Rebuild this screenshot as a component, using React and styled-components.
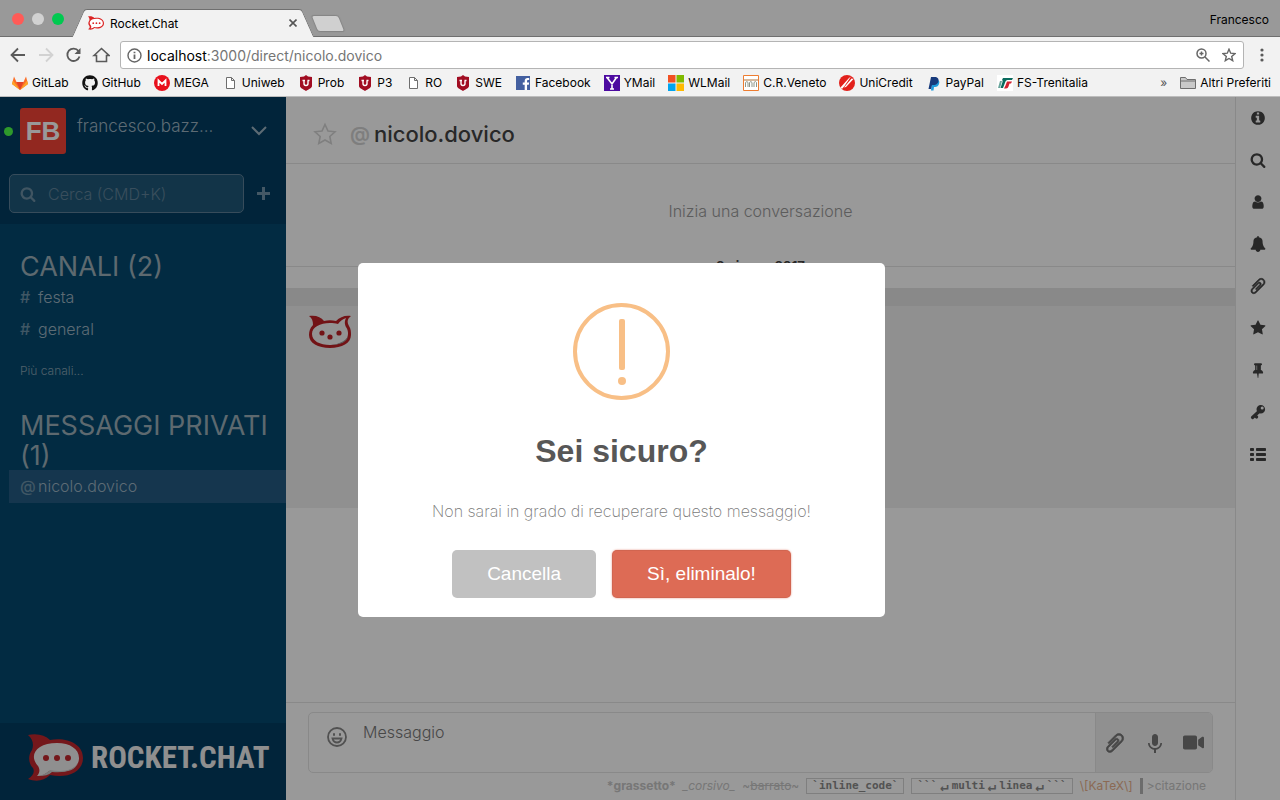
import React from "react";
import styled, { createGlobalStyle, css } from "styled-components";
import { FaGithub, FaVideo, FaFacebookF } from "react-icons/fa";
import { MdKeyboardVoice } from "react-icons/md";

const sans = `Inter, "Liberation Sans", sans-serif`;
const helvetica = `"Liberation Sans", Arial, sans-serif`;
const mono = `"DejaVu Sans Mono", "Liberation Mono", monospace`;

const GlobalStyle = createGlobalStyle`
  *, *::before, *::after { box-sizing: border-box; }
  body { margin: 0; font-family: ${sans}; }
  button { font: inherit; color: inherit; padding: 0; border: 0; background: none; cursor: pointer; }
  a { color: inherit; text-decoration: none; }
  svg { display: block; flex: none; }
`;

const Window = styled.div`
  display: flex;
  flex-direction: column;
  height: 100vh;
  min-height: 640px;
  overflow: hidden;
`;

/* ---------- browser chrome ---------- */

const TitleBar = styled.div`
  display: flex;
  align-items: flex-end;
  height: 37px;
  padding: 0 11px 0 12px;
  background: #999;
  border-bottom: 1px solid #6f6f6f;
  font-size: 12px;
`;

const Lights = styled.div`
  display: flex;
  gap: 8px;
  padding-bottom: 11px;
`;

const Light = styled.button`
  && { background: ${(p) => p.$color}; }
  width: 12px;
  height: 12px;
  border-radius: 50%;
`;

const Tab = styled.div`
  position: relative;
  z-index: 0;
  display: flex;
  align-items: center;
  width: 230px;
  height: 28px;
  margin: 0 0 -1px 14px;
  padding: 0 11px 0 10px;
  gap: 6px;
  color: #000;
  &::before, &::after {
    content: "";
    position: absolute;
    z-index: -1;
    top: 0;
    bottom: 0;
    width: 60%;
    background: #f2f2f2;
    border-top: 1px solid #6f6f6f;
  }
  &::before {
    left: 0;
    border-left: 1px solid #6f6f6f;
    border-top-left-radius: 3px;
    transform: skewX(-24deg);
  }
  &::after {
    right: 0;
    border-right: 1px solid #6f6f6f;
    border-top-right-radius: 3px;
    transform: skewX(24deg);
  }
`;

const TabTitle = styled.span`
  flex: 1;
`;

const NewTab = styled.button`
  width: 26px;
  height: 15px;
  margin: 0 0 5px 7px;
  && { background: #d0d0d0; }
  box-shadow: 0 0 1px 1px #858585;
  border-radius: 2px;
  transform: skewX(22deg);
`;

const Profile = styled.button`
  margin: 0 0 8px auto;
  line-height: 16px;
`;

const Toolbar = styled.div`
  display: flex;
  align-items: center;
  gap: 10px;
  height: 36px;
  padding: 0 10px 0 8px;
  background: #f2f2f2;
  color: #666;
`;

const NavButton = styled.button`
  width: 18px;
  height: 18px;
  && { color: ${(p) => (p.$dim ? "#d2d2d2" : "#5a5a5a")}; }
`;

const AddressBox = styled.div`
  display: flex;
  flex: 1;
  align-items: center;
  gap: 12px;
  height: 28px;
  padding: 0 7px 0 6px;
  background: #fff;
  border: 1px solid #b4b4b4;
  border-radius: 3px;
`;

const Address = styled.a`
  flex: 1;
  margin-left: -7px;
  font-size: 14px;
  color: #757575;
  b { font-weight: 400; color: #000; }
`;

const BookmarkBar = styled.nav`
  display: flex;
  align-items: center;
  gap: 13px;
  height: 24px;
  padding: 0 9px 4px 12px;
  background: #f2f2f2;
  border-bottom: 1px solid #bdbdbd;
  font-size: 12px;
  white-space: nowrap;
`;

const Bookmark = styled.a`
  display: flex;
  align-items: center;
  gap: 4px;
  line-height: 16px;
`;

const More = styled.button`
  margin-left: auto;
  && { color: #555; }
`;

/* ---------- chat page ---------- */

const Page = styled.div`
  position: relative;
  display: flex;
  flex: 1;
  min-height: 0;
`;

const Sidebar = styled.aside`
  display: flex;
  flex: none;
  flex-direction: column;
  width: 286px;
  background: #04496f;
  color: #9bb3c2;
  font-size: 16px;
  font-weight: 300;
`;

const SideHeader = styled.header`
  height: 127px;
  padding: 11px 9px 0 4px;
  background: #033d61;
`;

const Account = styled.div`
  display: flex;
  align-items: center;
  height: 46px;
`;

const Status = styled.span`
  width: 9px;
  height: 9px;
  margin-right: 7px;
  border-radius: 50%;
  background: #4eff49;
`;

const Initials = styled.div`
  width: 46px;
  height: 46px;
  border-radius: 3px;
  background: #f44336;
  color: #fff;
  font: 700 26px/46px ${helvetica};
  text-align: center;
`;

const UserName = styled.span`
  flex: 1;
  margin: 0 0 10px 11px;
  font-size: 17px;
  line-height: 24px;
`;

const MenuButton = styled.button`
  margin-right: 10px;
`;

const SearchRow = styled.div`
  display: flex;
  align-items: center;
  gap: 13px;
  padding: 20px 7px 0 5px;
`;

const SearchField = styled.label`
  display: flex;
  flex: 1;
  align-items: center;
  gap: 12px;
  height: 39px;
  padding: 0 10px;
  border: 1px solid #5c7f98;
  border-radius: 5px;
  background: #1f5878;
  color: #6c8ea4;
`;

const SearchInput = styled.input`
  flex: 1;
  width: 0;
  padding: 0;
  border: 0;
  outline: 0;
  background: none;
  color: #fff;
  font: 300 16px/24px ${sans};
  &::placeholder { color: #5f839b; opacity: 1; }
`;

const AddButton = styled.button`
  && { color: #7293a8; }
`;

const Rooms = styled.nav`
  flex: 1;
  min-height: 0;
  padding: 28px 0 0 9px;
`;

const RoomHeading = styled.h3`
  margin: 0 0 -1px;
  padding: 0 0 0 11px;
  font-size: 27px;
  font-weight: 400;
  line-height: 30px;
  color: #9bafba;
`;

const Room = styled.a`
  display: flex;
  gap: 4px;
  height: ${(p) => (p.$active ? 33 : 32)}px;
  padding-left: 11px;
  line-height: 32px;
  background: ${(p) => (p.$active ? "#235a82" : "none")};
`;

const Sigil = styled.span`
  width: 14px;
  font-weight: 500;
  color: #6c91a8;
`;

const MoreRooms = styled.a`
  display: block;
  padding: 17px 0 31px 11px;
  font-size: 12px;
  line-height: 18px;
  color: #85a1b2;
`;

const SideFooter = styled.footer`
  display: flex;
  align-items: center;
  gap: 8px;
  height: 77px;
  padding: 0 0 8px 28px;
  background: #033d61;
  color: #fff;
`;

const Wordmark = styled.span`
  font-family: "Roboto Condensed", "Open Sans Condensed", "DejaVu Sans Condensed", ${sans};
  font-size: 31px;
  font-weight: 700;
  line-height: 40px;
  color: #efefef;
`;

const Main = styled.main`
  display: flex;
  flex: 1;
  flex-direction: column;
  min-width: 0;
  background: #fff;
`;

const RoomHeader = styled.header`
  display: flex;
  align-items: center;
  height: 67px;
  padding: 8px 27px 0;
  border-bottom: 1px solid #e4e4e4;
  color: #d4d4d4;
`;

const RoomTitle = styled.h2`
  display: flex;
  gap: 4px;
  margin: 0 0 0 13px;
  font-size: 22px;
  font-weight: 500;
  line-height: 28px;
  color: #444;
`;

const TitleSigil = styled.span`
  font-size: 20px;
  font-weight: 600;
  color: #d2d2d2;
`;

const Messages = styled.section`
  flex: 1;
  min-height: 0;
  overflow: hidden;
`;

const StartText = styled.p`
  margin: 0;
  padding: 35px 0 39px;
  font-size: 16px;
  font-weight: 300;
  line-height: 24px;
  text-align: center;
  color: #9a9a9a;
`;

const DateDivider = styled.div`
  display: flex;
  align-items: center;
  height: 8px;
  font-size: 13px;
  font-weight: 700;
  color: #444;
  &::before, &::after {
    content: "";
    flex: 1;
    height: 1px;
    background: #e4e4e4;
  }
  span { padding: 0 10px; }
`;

const Unread = styled.div`
  height: 18px;
  margin-top: 18px;
  background: #e4e4e4;
`;

const Message = styled.article`
  height: 202px;
  padding: 9px 22px;
  background: #f1f1f1;
`;

const Composer = styled.footer`
  padding: 9px 22px 6px;
  border-top: 1px solid #e4e4e4;
`;

const ComposerBox = styled.div`
  display: flex;
  height: 61px;
  overflow: hidden;
  border: 1px solid #e4e4e4;
  border-radius: 5px;
  color: #888;
`;

const EmojiButton = styled.button`
  margin: 0 16px 12px 18px;
`;

const MessageInput = styled.textarea`
  flex: 1;
  padding: 7px 0;
  border: 0;
  outline: 0;
  resize: none;
  background: none;
  font: 300 16px/24px ${sans};
  &::placeholder { color: #777; opacity: 1; }
`;

const Actions = styled.div`
  display: flex;
  align-items: center;
  justify-content: space-between;
  width: 117px;
  padding: 0 8px;
  border-left: 1px solid #e4e4e4;
  background: #f1f1f1;
  && button { color: #777; }
`;

const Hints = styled.div`
  display: flex;
  align-items: center;
  justify-content: flex-end;
  gap: 7px;
  height: 20px;
  padding: 4px 7px 0 0;
  margin-top: 1px;
  font-size: 12px;
  line-height: 16px;
  white-space: nowrap;
  color: #c6c6c6;
`;

const Code = styled.code`
  display: flex;
  align-items: center;
  height: 16px;
  padding: 0 5px;
  border: 1px solid #d4d4d4;
  font: 700 11px/14px ${mono};
  color: #8a8a8a;
`;

const Return = styled.span`
  padding: 0 3px;
  font-size: 14px;
`;

const Katex = styled.span`
  color: #e8b08c;
`;

const Quote = styled.span`
  padding-left: 4px;
  border-left: 3px solid #b4b4b4;
`;

const Rail = styled.nav`
  display: flex;
  flex: none;
  flex-direction: column;
  align-items: center;
  width: 45px;
  border-left: 1px solid #e4e4e4;
  background: #fff;
  button {
    display: grid;
    place-items: center;
    width: 44px;
    height: 42px;
    color: #444;
  }
`;

/* ---------- confirmation dialog ---------- */

const Overlay = styled.div`
  position: absolute;
  inset: 0;
  background: rgba(0, 0, 0, 0.4);
`;

const Dialog = styled.section`
  position: absolute;
  top: 50%;
  left: 50%;
  display: flex;
  flex-direction: column;
  align-items: center;
  width: 527px;
  margin: -186px 0 0 -282px;
  padding: 40px 18px 19px;
  border-radius: 5px;
  background: #fff;
  font-family: ${helvetica};
`;

const DialogTitle = styled.h2`
  margin: 29px 0 26px;
  font-size: 32px;
  font-weight: 700;
  line-height: 44px;
  color: #575757;
`;

const DialogText = styled.p`
  margin: 0;
  font: 200 16px/24px ${sans};
  color: #797979;
`;

const DialogButtons = styled.div`
  display: flex;
  gap: 16px;
  margin-top: 27px;
`;

const DialogButton = styled.button`
  height: 48px;
  padding: 0 35px;
  border-radius: 5px;
  font: 400 19px/24px ${helvetica};
  && {
    color: #fff;
    background: ${(p) => (p.$danger ? "#dd6b55" : "#c1c1c1")};
  }
  ${(p) => p.$danger && css`box-shadow: 0 0 2px rgba(221, 107, 85, 0.8), inset 0 0 0 1px rgba(0, 0, 0, 0.05);`}
`;

/* ---------- drawings ---------- */

const glyphs = {
  info: "M1152 1376v-160q0-14-9-23t-23-9h-96v-512q0-14-9-23t-23-9h-320q-14 0-23 9t-9 23v160q0 14 9 23t23 9h96v320h-96q-14 0-23 9t-9 23v160q0 14 9 23t23 9h448q14 0 23-9t9-23zm-128-896v-160q0-14-9-23t-23-9h-192q-14 0-23 9t-9 23v160q0 14 9 23t23 9h192q14 0 23-9t9-23zm640 416q0 209-103 385.5t-279.5 279.5-385.5 103-385.5-103-279.5-279.5-103-385.5 103-385.5 279.5-279.5 385.5-103 385.5 103 279.5 279.5 103 385.5z",
  search: "M1216 832q0-185-131.5-316.5t-316.5-131.5-316.5 131.5-131.5 316.5 131.5 316.5 316.5 131.5 316.5-131.5 131.5-316.5zm512 832q0 52-38 90t-90 38q-54 0-90-38l-343-342q-179 124-399 124-143 0-273.5-55.5t-225-150-150-225-55.5-273.5 55.5-273.5 150-225 225-150 273.5-55.5 273.5 55.5 225 150 150 225 55.5 273.5q0 220-124 399l343 343q37 37 37 90z",
  user: "M1536 1399q0 109-62.5 187t-150.5 78h-854q-88 0-150.5-78t-62.5-187q0-85 8.5-160.5t31.5-152 58.5-131 94-89 134.5-34.5q131 128 313 128t313-128q76 0 134.5 34.5t94 89 58.5 131 31.5 152 8.5 160.5zm-256-887q0 159-112.5 271.5t-271.5 112.5-271.5-112.5-112.5-271.5 112.5-271.5 271.5-112.5 271.5 112.5 112.5 271.5z",
  bell: "M1728 1408q0 52-38 90t-90 38h-448q0 106-75 181t-181 75-181-75-75-181h-448q-52 0-90-38t-38-90q50-42 91-88t85-119.5 74.5-158.5 50-206 19.5-260q0-152 117-282.5t307-158.5q-8-19-8-39 0-40 28-68t68-28 68 28 28 68q0 20-8 39 190 28 307 158.5t117 282.5q0 139 19.5 260t50 206 74.5 158.5 85 119.5 91 88z",
  clip: "M1596 1385q0 117-79 196t-196 79q-135 0-235-100l-777-776q-113-115-113-271 0-159 110-270t269-111q158 0 273 113l605 606q10 10 10 22 0 16-30.5 46.5t-46.5 30.5q-13 0-23-10l-606-607q-79-77-181-77-106 0-179 75t-73 181q0 105 76 181l776 777q63 63 145 63 64 0 106-42t42-106q0-82-63-145l-581-581q-26-24-60-24-29 0-48 19t-19 48q0 32 25 59l410 410q10 10 10 22 0 16-31 47t-47 31q-12 0-22-10l-410-410q-63-61-63-149 0-82 57-139t139-57q88 0 149 63l581 581q100 98 100 235z",
  star: "M1728 647q0 22-26 48l-363 354 86 500q1 7 1 20 0 21-10.5 35.5t-30.5 14.5q-19 0-40-12l-449-236-449 236q-22 12-40 12-21 0-31.5-14.5t-10.5-35.5q0-6 2-20l86-500-364-354q-25-27-25-48 0-37 56-46l502-73 225-455q19-41 49-41t49 41l225 455 502 73q56 9 56 46z",
  pin: "M800 864v-448q0-14-9-23t-23-9-23 9-9 23v448q0 14 9 23t23 9 23-9 9-23zm672 352q0 26-19 45t-45 19h-429l-51 483q-2 12-10.5 20.5t-20.5 8.5h-1q-27 0-32-27l-76-485h-404q-26 0-45-19t-19-45q0-123 78.5-221.5t177.5-98.5v-512q-52 0-90-38t-38-90 38-90 90-38h640q52 0 90 38t38 90-38 90-90 38v512q99 0 177.5 98.5t78.5 221.5z",
};

const Glyph = ({ name, size = 16, flip, bold = 0 }) => (
  <svg width={size} height={size} viewBox="0 0 1792 1792" fill="currentColor" stroke="currentColor" strokeWidth={bold} aria-hidden="true">
    <path d={glyphs[name]} transform={flip ? "translate(1792 0) scale(-1 1)" : undefined} />
  </svg>
);

const KeyIcon = () => (
  <svg width="16" height="16" viewBox="0 0 16 16" aria-hidden="true">
    <path d="M2.500 13.500 9 7.500M4.800 11.500l1.800 1.500" fill="none" stroke="currentColor" strokeWidth="3.200" strokeLinecap="round" />
    <path fillRule="evenodd" d="M10.800 1a4.300 4.300 0 1 1 0 8.600 4.300 4.300 0 0 1 0-8.600zm1.400 1.600a1.500 1.500 0 1 0 0 3 1.500 1.500 0 0 0 0-3z" fill="currentColor" />
  </svg>
);

const ListIcon = () => (
  <svg width="16" height="13" viewBox="0 0 16 13" fill="currentColor" aria-hidden="true">
    {[0, 5, 10].map((y) => (
      <g key={y}>
        <rect x="0" y={y} width="4" height="3" rx=".8" />
        <rect x="6" y={y} width="10" height="3" rx=".8" />
      </g>
    ))}
  </svg>
);

const Stroke = ({ size = 18, w = 2, box = 18, children }) => (
  <svg width={size} height={size} viewBox={`0 0 ${box} ${box}`} fill="none" stroke="currentColor" strokeWidth={w} aria-hidden="true">
    {children}
  </svg>
);

const RocketLogo = ({ width, height, outlined }) => (
  <svg width={width} height={height} viewBox="0 0 55 47" aria-hidden="true">
    <path
      d="M0 1C9-1 17 1 22 6c17-3 33 4 33 18S39 45 22 41C16 47 8 48 0 45c5-3 7-7 5-11-5-5-5-13-1-18C6 11 5 5 0 1z"
      fill={outlined ? "#db2323" : "#c1272d"}
    />
    <path d="M29 9c13 0 22 6 22 15s-9 14-22 14c-3 0-6 0-8-1-3 3-7 5-12 5 3-3 3-7 1-10-10-11-1-23 19-23z" fill={outlined ? "#fff" : "#efefef"} />
    {!outlined && <path d="M50 29c-5 8-16 9-28 7-3 3-7 5-11 6 5 0 10-1 13-4 13 1 23-1 26-9z" fill="#cccccc" />}
    <g fill={outlined ? "#db2323" : "#c1272d"}>
      <circle cx="18" cy="24" r="3" />
      <circle cx="29" cy="24" r="3" />
      <circle cx="40" cy="24" r="3" />
    </g>
  </svg>
);

const RocketCat = () => (
  <svg width="44" height="34" viewBox="0 0 44 34" role="img" aria-label="rocket.cat">
    <path d="M1 1c7-1 12 1 15 5 4-1 8-1 12 0 4-4 9-6 15-5-4 3-4 6-2 10 2 3 2 6 2 9 0 8-9 13-21 13S1 28 1 20c0-4 1-7 4-10C5 6 4 3 1 1z" fill="#bf2026" />
    <path d="M22 8c3 0 5 0 8 1 2-3 5-5 8-6-2 4-1 7 0 9 2 3 2 5 2 7 0 7-8 11-18 11S4 26 4 19 12 8 22 8z" fill="#f6f6f6" />
    <path d="M40 21c-2 5-9 8-17 9 10 0 17-4 17-9z" fill="#999" />
    <g fill="#bf2026">
      <circle cx="14" cy="18" r="2.600" />
      <circle cx="31" cy="18" r="2.600" />
      <circle cx="22" cy="22" r="2.600" />
    </g>
  </svg>
);

const WarningIcon = () => (
  <svg width="97" height="97" viewBox="0 0 97 97" aria-hidden="true">
    <circle cx="48.500" cy="48.500" r="46.500" fill="none" stroke="#f8bf86" strokeWidth="4" />
    <rect x="46" y="16" width="6" height="51" rx="2" fill="#f8bf86" />
    <circle cx="49" cy="78" r="4" fill="#f8bf86" />
  </svg>
);

const Small = ({ children }) => (
  <svg width="16" height="16" viewBox="0 0 16 16" aria-hidden="true">{children}</svg>
);

const GitLabIcon = () => (
  <Small>
    <path d="M8 15 0 9l2-7.500L4.500 7h7L14 1.500 16 9z" fill="#fc6d26" />
    <path d="M8 15 4.500 7h7z" fill="#e24329" />
    <path d="M8 15 0 9l1-3.500zM8 15l8-6-1-3.500z" fill="#fca326" />
  </Small>
);
const MegaIcon = () => (
  <Small>
    <circle cx="8" cy="8" r="8" fill="#e8101c" />
    <path d="M4.500 11V5.500L8 9l3.500-3.500V11" fill="none" stroke="#fff" strokeWidth="1.800" />
  </Small>
);
const FileIcon = () => (
  <Small>
    <path d="M4.500 2.500h5l3 3v8h-8zM9.500 2.500v3h3" fill="#fff" stroke="#6e6e6e" />
  </Small>
);
const ShieldIcon = () => (
  <Small>
    <path d="M8 0l2 1.500 4 .5v9c0 2-3 3-6 5-3-2-6-3-6-5V2l4-.5z" fill="#a10d22" />
    <path d="M4.500 5.500H7M9.500 5.500h2M6 5.500v3q0 2 2 2t2-2v-3" fill="none" stroke="#fff" strokeWidth="1.400" />
  </Small>
);
const FacebookIcon = () => (
  <Small>
    <rect x="1" y="1" width="14" height="14" fill="#4460a0" />
    <g transform="translate(5 3)"><FaFacebookF size={12} color="#fff" /></g>
  </Small>
);
const YahooIcon = () => (
  <Small>
    <path d="M0 0h16v16H0z" fill="#4c0aa0" />
    <path d="M3 2.500 8 9l4.500-6.500M8 8.500v5.500M2 2.500h3.500M10.500 2.500H14M6 14h4" fill="none" stroke="#fff" strokeWidth="1.600" />
  </Small>
);
const WindowsIcon = () => (
  <Small>
    <path d="M0 0h7.500v7.500H0z" fill="#f25022" />
    <path d="M8.500 0H16v7.500H8.500z" fill="#7fba00" />
    <path d="M0 8.500h7.500V16H0z" fill="#00a4ef" />
    <path d="M8.500 8.500H16V16H8.500z" fill="#ffb900" />
  </Small>
);
const VenetoIcon = () => (
  <Small>
    <path d="M.5.5h15v15H.5z" fill="#fff" stroke="#ee7d31" />
    <path d="M1 5h14" stroke="#c9a27c" strokeWidth="1.500" />
    <path d="M2.500 12V7.500q1.500-2 2.500 0V12M6.500 12V7.500q1.500-2 2.500 0V12M11 12V7.500q1.500-2 2.500 0V12" fill="none" stroke="#8d9689" />
  </Small>
);
const UniCreditIcon = () => (
  <Small>
    <circle cx="8" cy="8" r="8" fill="#e2211c" />
    <path d="M1.500 12.500 10 3l2-1.500L5.500 11 3 14zM5 12.500l7.500-9 2 .5L7 12z" fill="#fff" />
  </Small>
);
const PayPalIcon = () => (
  <Small>
    <path d="M6 5h6q2 1 1 4t-4 3H8l-.5 3.500H5z" fill="#1f9bdc" />
    <path d="M5 2h5q3 1 2.500 4T8.500 10H6l-1 4H2.500z" fill="#173a7c" />
  </Small>
);
const TrenitaliaIcon = () => (
  <Small>
    <path d="M0 0h16v16H0z" fill="#fff" />
    <path d="M6 3h10l-1 2h-4.500Q9 5 8.500 6.500L6 13H3.500L5.500 7Q6 5 5 5z" fill="#0b6b5e" />
    <path d="M3 6h2L3 13H1z" fill="#69a59c" />
    <path d="M10 6.500h5L14 8.500h-1.500l-1 3Q11 13.500 9 13.500H7l1.500-3z" fill="#d4212f" />
  </Small>
);
const FolderIcon = () => (
  <Small>
    <path d="M.5 13.500v-11h5l1.500 2h8.500v9z" fill="#c9c9c9" stroke="#6e6e6e" />
    <path d="M1 6h14" stroke="#6e6e6e" />
  </Small>
);

const bookmarks = [
  ["GitLab", GitLabIcon],
  ["GitHub", () => <FaGithub size={16} color="#111" />],
  ["MEGA", MegaIcon],
  ["Uniweb", FileIcon],
  ["Prob", ShieldIcon],
  ["P3", ShieldIcon],
  ["RO", FileIcon],
  ["SWE", ShieldIcon],
  ["Facebook", FacebookIcon],
  ["YMail", YahooIcon],
  ["WLMail", WindowsIcon],
  ["C.R.Veneto", VenetoIcon],
  ["UniCredit", UniCreditIcon],
  ["PayPal", PayPalIcon],
  ["FS-Trenitalia", TrenitaliaIcon],
];

const rail = [
  ["Informazioni", <Glyph name="info" />],
  ["Cerca", <Glyph name="search" />],
  ["Utente", <Glyph name="user" />],
  ["Notifiche", <Glyph name="bell" />],
  ["Allegati", <Glyph name="clip" size={18} flip bold={60} />],
  ["Preferiti", <Glyph name="star" />],
  ["Fissati", <Glyph name="pin" />],
  ["Chiavi", <KeyIcon />],
  ["Elenco", <ListIcon />],
];

function BrowserChrome() {
  return (
    <>
      <TitleBar>
        <Lights>
          <Light $color="#ff5b57" aria-label="Chiudi" />
          <Light $color="#d1d1d1" aria-label="Riduci" />
          <Light $color="#00c950" aria-label="Ingrandisci" />
        </Lights>
        <Tab>
          <RocketLogo width={16} height={14} outlined />
          <TabTitle>Rocket.Chat</TabTitle>
          <button aria-label="Chiudi scheda">
            <Stroke size={8} box={8} w={1.6}><path d="M.5.5l7 7M7.500.5l-7 7" stroke="#555" /></Stroke>
          </button>
        </Tab>
        <NewTab aria-label="Nuova scheda" />
        <Profile>Francesco</Profile>
      </TitleBar>
      <Toolbar>
        <NavButton aria-label="Indietro"><Stroke w={1.8}><path d="M17 9H4M10 2.500 3.500 9 10 15.500" /></Stroke></NavButton>
        <NavButton aria-label="Avanti" $dim><Stroke w={1.8}><path d="M3 9h13M10 2.500 16.500 9 10 15.500" /></Stroke></NavButton>
        <NavButton aria-label="Ricarica">
          <Stroke w={1.8}><path d="M14.500 5A6.200 6.200 0 1 0 15.500 10.500" /><path d="M16.500 2V8H10.500z" fill="currentColor" stroke="none" /></Stroke>
        </NavButton>
        <NavButton aria-label="Pagina iniziale"><Stroke w={1.6}><path d="M2 9.500 9.500 2.500l7.500 7h-2.500v6h-10v-6z" /></Stroke></NavButton>
        <AddressBox>
          <Stroke size={15} box={15} w={1.4}>
            <circle cx="7.500" cy="7.500" r="6.500" />
            <path d="M7.500 6.500V11M7.500 3.700v1.600" strokeWidth="1.800" />
          </Stroke>
          <Address href="#"><b>localhost</b>:3000/direct/nicolo.dovico</Address>
          <Stroke size={14} box={14} w={1.5}>
            <circle cx="5.500" cy="5.500" r="4.500" />
            <path d="M9 9l4.500 4.500M3.500 5.500h4M5.500 3.500v4" />
          </Stroke>
          <Stroke size={14} box={14} w={1.4}>
            <path d="M7 1.200 8.700 5.200l4.300.4-3.300 2.900 1 4.200L7 10.500l-3.700 2.200 1-4.200L1 5.600l4.300-.4z" />
          </Stroke>
        </AddressBox>
        <svg width="16" height="14" viewBox="0 0 16 14" fill="#5a5a5a" aria-hidden="true">
          <circle cx="8" cy="2" r="1.600" /><circle cx="8" cy="7" r="1.600" /><circle cx="8" cy="12" r="1.600" />
        </svg>
      </Toolbar>
      <BookmarkBar aria-label="Preferiti">
        {bookmarks.map(([label, Icon]) => (
          <Bookmark href="#" key={label}><Icon />{label}</Bookmark>
        ))}
        <More aria-label="Altri">»</More>
        <Bookmark href="#"><FolderIcon />Altri Preferiti</Bookmark>
      </BookmarkBar>
    </>
  );
}

function SideNav() {
  return (
    <Sidebar>
      <SideHeader>
        <Account>
          <Status />
          <Initials>FB</Initials>
          <UserName>francesco.bazz...</UserName>
          <MenuButton aria-label="Menu">
            <svg width="16" height="10" viewBox="0 0 16 10" fill="none" stroke="currentColor" strokeWidth="2"><path d="M1 1l7 7 7-7" /></svg>
          </MenuButton>
        </Account>
        <SearchRow>
          <SearchField>
            <Glyph name="search" />
            <SearchInput placeholder="Cerca (CMD+K)" aria-label="Cerca" />
          </SearchField>
          <AddButton aria-label="Nuovo">
            <svg width="13" height="13" viewBox="0 0 13 13" fill="currentColor"><path d="M5 0h3v5h5v3H8v5H5V8H0V5h5z" /></svg>
          </AddButton>
        </SearchRow>
      </SideHeader>
      <Rooms>
        <RoomHeading>CANALI (2)</RoomHeading>
        <Room href="#"><Sigil>#</Sigil>festa</Room>
        <Room href="#"><Sigil>#</Sigil>general</Room>
        <MoreRooms href="#">Più canali...</MoreRooms>
        <RoomHeading>MESSAGGI PRIVATI (1)</RoomHeading>
        <Room href="#" $active><Sigil>@</Sigil>nicolo.dovico</Room>
      </Rooms>
      <SideFooter>
        <RocketLogo width={55} height={47} />
        <Wordmark>ROCKET.CHAT</Wordmark>
      </SideFooter>
    </Sidebar>
  );
}

function Conversation() {
  return (
    <Main>
      <RoomHeader>
        <button aria-label="Preferito">
          <Stroke size={24} box={24} w={1.6}>
            <path d="M12 2.500l3 6.500 7 .8-5.200 4.700 1.400 7L12 18l-6.200 3.500 1.400-7L2 9.800 9 9z" />
          </Stroke>
        </button>
        <RoomTitle><TitleSigil>@</TitleSigil>nicolo.dovico</RoomTitle>
      </RoomHeader>
      <Messages>
        <StartText>Inizia una conversazione</StartText>
        <DateDivider><span>2 giugno 2017</span></DateDivider>
        <Unread />
        <Message><RocketCat /></Message>
      </Messages>
      <Composer>
        <ComposerBox>
          <EmojiButton aria-label="Emoji">
            <Stroke size={20} box={20} w={1.8}>
              <circle cx="10" cy="10" r="9" />
              <path d="M5.500 11.500h9q-1 4-4.500 4t-4.500-4z" />
              <path d="M6 7.500h2M12 7.500h2" strokeWidth="2.400" />
            </Stroke>
          </EmojiButton>
          <MessageInput placeholder="Messaggio" aria-label="Messaggio" />
          <Actions>
            <button aria-label="Allega"><Glyph name="clip" size={22} flip bold={60} /></button>
            <button aria-label="Registra"><MdKeyboardVoice size={24} /></button>
            <button aria-label="Video"><FaVideo size={21} /></button>
          </Actions>
        </ComposerBox>
        <Hints>
          <b>*grassetto*</b>
          <i>_corsivo_</i>
          <span>~<s>barrato</s>~</span>
          <Code>`inline_code`</Code>
          <Code>```<Return>↵</Return>multi<Return>↵</Return>linea<Return>↵</Return>```</Code>
          <Katex>\[KaTeX\]</Katex>
          <Quote>&gt;citazione</Quote>
        </Hints>
      </Composer>
    </Main>
  );
}

export default function App() {
  return (
    <Window>
      <GlobalStyle />
      <BrowserChrome />
      <Page>
        <SideNav />
        <Conversation />
        <Rail aria-label="Strumenti">
          {rail.map(([label, icon]) => (
            <button aria-label={label} key={label}>{icon}</button>
          ))}
        </Rail>
        <Overlay />
        <Dialog role="alertdialog" aria-labelledby="confirm-title">
          <WarningIcon />
          <DialogTitle id="confirm-title">Sei sicuro?</DialogTitle>
          <DialogText>Non sarai in grado di recuperare questo messaggio!</DialogText>
          <DialogButtons>
            <DialogButton>Cancella</DialogButton>
            <DialogButton $danger>Sì, eliminalo!</DialogButton>
          </DialogButtons>
        </Dialog>
      </Page>
    </Window>
  );
}
